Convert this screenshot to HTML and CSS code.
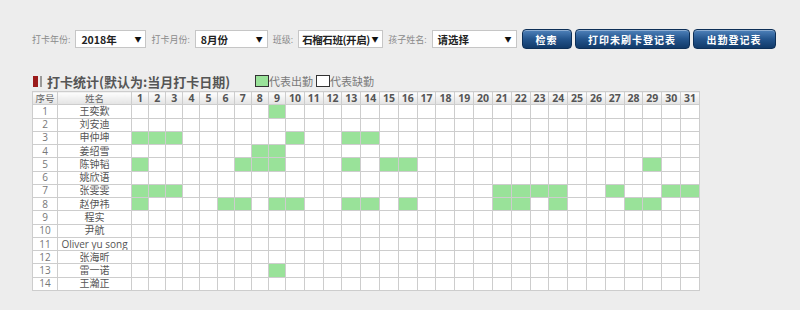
FILE: index.html
```html
<!DOCTYPE html>
<html lang="zh-CN">
  <head>
    <meta charset="UTF-8" />
    <meta name="viewport" content="width=device-width, initial-scale=1.0" />
    <title>打卡统计</title>
    <link rel="stylesheet" href="styles.css">
  </head>
  <body>
    <div class="toolbar">
      <span class="label">打卡年份:</span>
      <div class="select select-year">2018年</div>
      <span class="label">打卡月份:</span>
      <div class="select select-month">8月份</div>
      <span class="label">班级:</span>
      <div class="select select-class">石榴石班(开启)</div>
      <span class="label">孩子姓名:</span>
      <div class="select select-child">请选择</div>
      <div class="actions">
        <button class="btn btn-search">检索</button>
        <button class="btn btn-print">打印未刷卡登记表</button>
        <button class="btn btn-sheet">出勤登记表</button>
      </div>
    </div>

    <div class="stats">
      <div class="stats-head">
        <h2 class="stats-title"><span class="mark"></span>打卡统计(默认为:当月打卡日期)</h2>
        <div class="legend">
          <span class="swatch swatch-on"></span>代表出勤
          <span class="swatch swatch-off"></span>代表缺勤
        </div>
      </div>
      <table class="sheet">
        <colgroup class="cols"></colgroup>
        <thead><tr class="head-row"></tr></thead>
        <tbody class="rows"></tbody>
      </table>
    </div>

    <script>
      const kids = [
        ["王奕歎", [9]],
        ["刘安迪", []],
        ["申仲坤", [1, 2, 3, 10, 13, 14]],
        ["姜绍雪", [8, 9]],
        ["陈钟韬", [1, 7, 8, 9, 13, 15, 16, 29]],
        ["姚欣语", []],
        ["张雯雯", [1, 2, 3, 21, 22, 23, 24, 27, 30, 31]],
        ["赵伊祎", [1, 6, 7, 9, 10, 13, 14, 16, 21, 22, 24, 28, 29]],
        ["程实", []],
        ["尹航", []],
        ["Oliver yu song", []],
        ["张海昕", []],
        ["雷一诺", [9]],
        ["王瀚正", []],
      ];
      const days = 31;

      const cols = document.querySelector(".cols");
      const head = document.querySelector(".head-row");
      const rows = document.querySelector(".rows");

      cols.innerHTML = '<col class="col-no"><col class="col-name">';
      head.innerHTML = '<th class="plain">序号</th><th class="plain">姓名</th>';
      for (let d = 1; d <= days; d++) {
        cols.innerHTML += `<col class="${d < 10 ? "col-d1" : "col-d2"}">`;
        head.innerHTML += `<th>${d}</th>`;
      }

      kids.forEach(([name, present], i) => {
        const tr = document.createElement("TR");
        let html = `<td class="no">${i + 1}</td><td class="name">${name}</td>`;
        for (let d = 1; d <= days; d++) {
          html += present.includes(d) ? '<td class="on"></td>' : "<td></td>";
        }
        tr.innerHTML = html;
        rows.appendChild(tr);
      });
    </script>
  </body>
</html>
```

FILE: styles.css
```css
body {
  margin: 0;
  background-color: #ededed;
  font-family: "Open Sans", "Noto Sans CJK SC", sans-serif;
  color: #555;
}
.toolbar {
  display: flex;
  align-items: center;
  gap: 5px;
  padding: 29px 0 0 32px;
  height: 20px;
}
.label {
  font-size: 9px;
  color: #8a8a8a;
}
.select {
  box-sizing: border-box;
  height: 18px;
  display: flex;
  align-items: center;
  justify-content: space-between;
  padding: 0 4px 0 5px;
  background-color: #fff;
  border: 1px solid #c6c6c6;
  font-family: "Noto Sans CJK SC", sans-serif;
  font-size: 10.5px;
  font-weight: bold;
  color: #222;
  white-space: nowrap;
}
.select::after {
  content: "▼";
  font-size: 7px;
  color: #111;
}
.select-year { width: 71px; }
.select-month { width: 73px; }
.select-class { width: 85px; padding-left: 3px; letter-spacing: -0.4px; }
.select-child { width: 85px; }
.actions {
  display: flex;
  gap: 3px;
}
.btn {
  height: 20px;
  padding: 0;
  border: 1px solid #0d2f57;
  border-radius: 4px;
  background: linear-gradient(#4f82bb, #24558d 50%, #113a69);
  box-shadow: inset 0 1px 0 rgba(255, 255, 255, 0.35);
  color: #fff;
  font-family: "Noto Sans CJK SC", sans-serif;
  font-size: 10px;
  font-weight: bold;
  letter-spacing: 1px;
}
.btn-search { width: 50px; }
.btn-print { width: 115px; }
.btn-sheet { width: 83px; }

.stats {
  margin: 24px 0 0 32px;
}
.stats-head {
  display: flex;
  align-items: center;
  height: 16px;
  margin-bottom: 2px;
}
.stats-title {
  display: flex;
  align-items: center;
  gap: 5px;
  margin: 0;
  font-family: "Noto Sans CJK SC", sans-serif;
  font-size: 13px;
  font-weight: bold;
  color: #555;
}
.mark {
  width: 5px;
  height: 11px;
  margin-left: 1px;
  padding-right: 2px;
  border-right: 2px solid #9a9a9a;
  background-color: #9b1b1b;
  background-clip: content-box;
}
.legend {
  display: flex;
  align-items: center;
  margin-left: 25px;
  font-family: "Noto Sans CJK SC", sans-serif;
  font-size: 11px;
  color: #7a7a7a;
}
.swatch {
  box-sizing: border-box;
  width: 14px;
  height: 12px;
  border: 1px solid #333;
  background-color: #fff;
}
.swatch-on {
  background-color: #99e299;
}
.swatch-off {
  margin-left: 3px;
}

.sheet {
  border-collapse: collapse;
  table-layout: fixed;
  width: 667px;
  background-color: #fff;
  font-size: 10px;
}
.col-no { width: 25px; }
.col-name { width: 74px; }
.col-d1 { width: 17.11px; }
.col-d2 { width: 18.82px; }
.sheet tr {
  height: 13.27px;
}
.sheet th,
.sheet td {
  padding: 0;
  border: 1px solid #cdcdcd;
  text-align: center;
  line-height: 11px;
  white-space: nowrap;
  overflow: hidden;
}
.sheet th {
  background: linear-gradient(#fdfdfd, #e3e3e3);
  font-size: 10.5px;
  font-weight: bold;
  color: #555;
}
.sheet th.plain {
  font-family: "Noto Sans CJK SC", sans-serif;
  font-size: 9.5px;
  font-weight: normal;
  color: #666;
}
.sheet td.no {
  color: #777;
}
.sheet td.name {
  color: #555;
}
.sheet td.on {
  background-color: #99e299;
}
```
